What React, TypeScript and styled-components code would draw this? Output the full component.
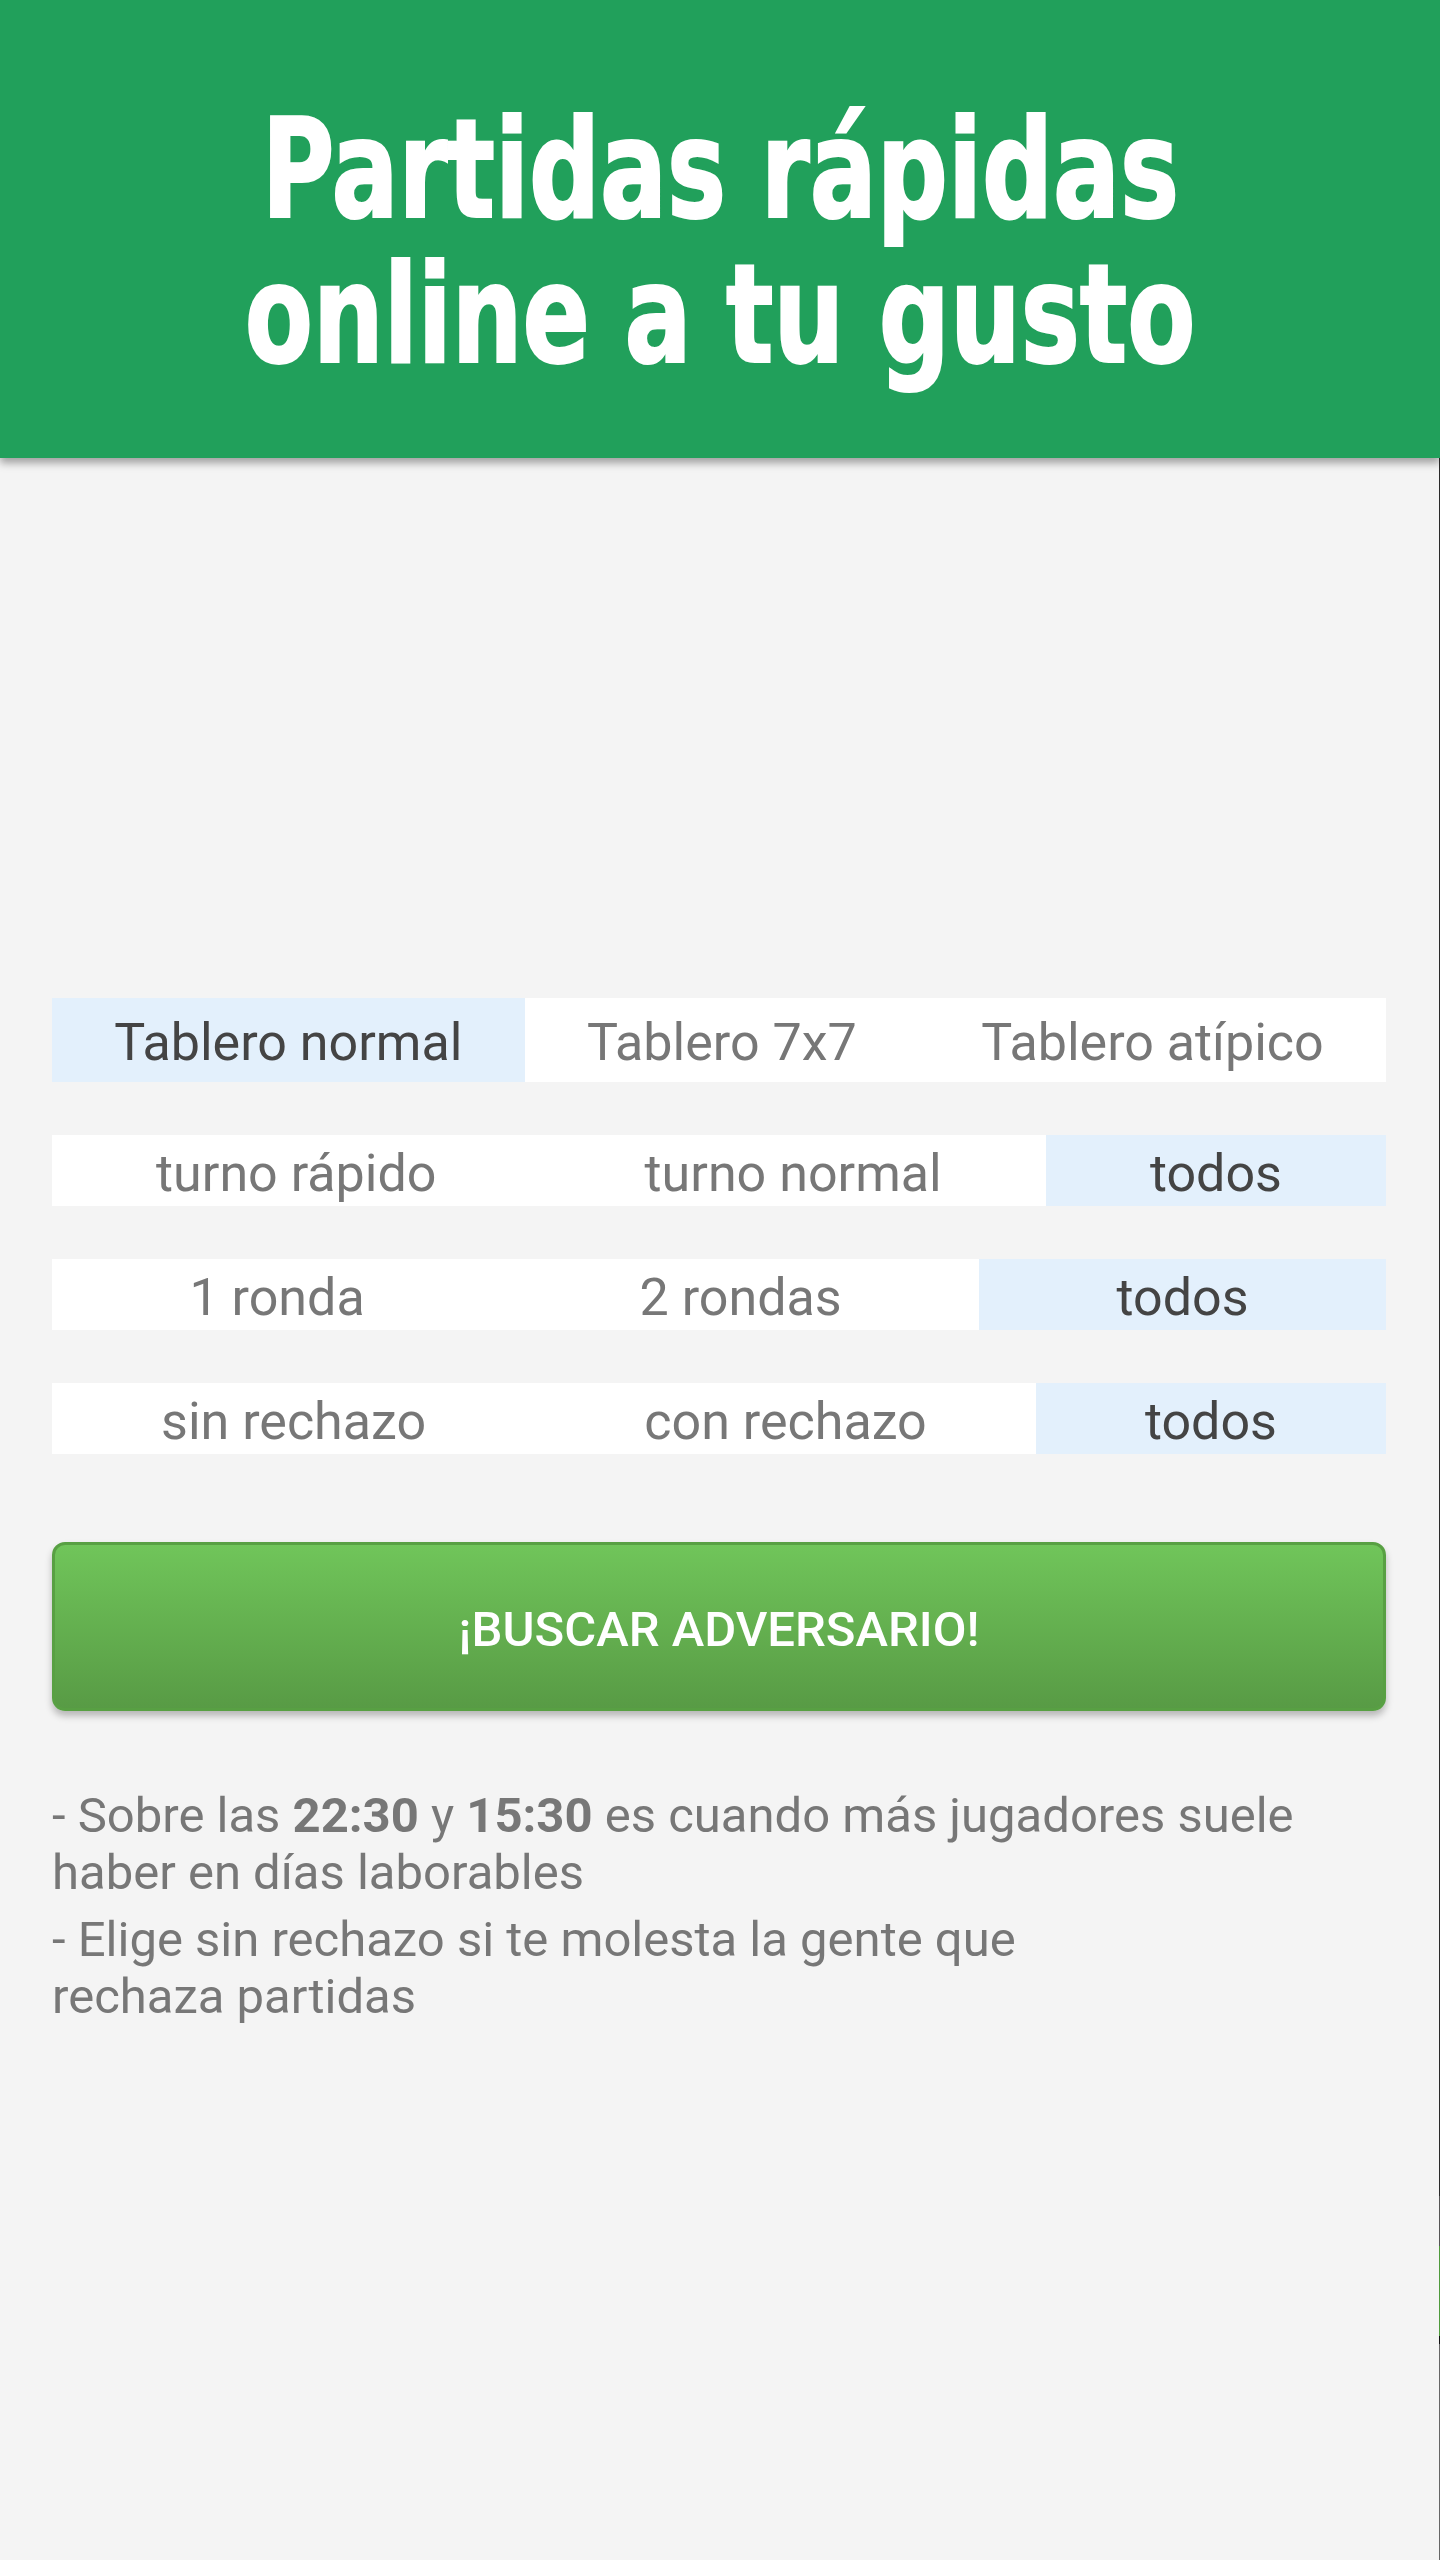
import { useState } from 'react';
import styled, { createGlobalStyle } from 'styled-components';

const GlobalStyle = createGlobalStyle`
  body {
    margin: 0;
    background: #f4f4f4;
    font-family: Roboto, 'Noto Sans', sans-serif;
  }
`;

const Page = styled.div`
  min-height: 2560px;
  display: flex;
  flex-direction: column;
`;

const Header = styled.header`
  position: relative;
  z-index: 1;
  background: #21a05b;
  padding: 97px 0 71px;
  text-align: center;
  box-shadow: 0 5px 8px rgba(0, 0, 0, 0.35);
`;

const Title = styled.h1`
  margin: 0;
  color: #fff;
  font-family: 'DejaVu Sans Condensed', 'DejaVu Sans', sans-serif;
  font-weight: 700;
  font-size: 138px;
  line-height: 145px;
`;

// the original uses a narrow display face; squeeze DejaVu to match
const TitleText = styled.span`
  display: inline-block;
  transform: scaleX(0.8);
  transform-origin: center;
  white-space: nowrap;
  -webkit-text-stroke: 2px #fff;
`;

const Body = styled.div`
  flex: 1;
  display: flex;
`;

const Main = styled.main`
  flex: 1;
  padding: 540px 53px 0 52px;
`;

// thin screen edge visible on the right of the capture
const Edge = styled.div`
  width: 1px;
  background: linear-gradient(
    to bottom,
    #2a2a2a 0,
    #2a2a2a 1738px,
    #555 1738px,
    #555 1788px,
    #4f9a3c 1788px,
    #4f9a3c 1878px,
    #111 1878px,
    #111 1886px,
    #666 1886px
  );
`;

const Groups = styled.div`
  display: flex;
  flex-direction: column;
  gap: 53px;
`;

const Row = styled.div<{ $height: number }>`
  display: flex;
  background: #fff;
  height: ${(p) => p.$height}px;
`;

const Cell = styled.div<{ $active: boolean }>`
  flex: 1 1 auto;
  display: flex;
  align-items: center;
  justify-content: center;
  padding-top: 5px;
  font-size: 52px;
  white-space: nowrap;
  cursor: pointer;
  color: ${(p) => (p.$active ? '#444' : '#777')};
  background: ${(p) => (p.$active ? '#e3f0fc' : 'transparent')};
`;

const SearchButton = styled.button`
  display: block;
  width: 100%;
  height: 169px;
  margin-top: 88px;
  padding-top: 6px;
  border: 3px solid #58a043;
  border-radius: 13px;
  background: linear-gradient(to bottom, #70c55a, #589b45);
  box-shadow: 0 5px 7px rgba(0, 0, 0, 0.25);
  color: #fff;
  font-family: Roboto, sans-serif;
  font-weight: 500;
  font-size: 49px;
  cursor: pointer;
`;

const Tips = styled.div`
  margin-top: 76px;
  color: #777;
  font-size: 49px;
  line-height: 57px;
`;

const Tip = styled.p`
  margin: 0 0 10px;
`;

const groups = [
  { height: 84, options: ['Tablero normal', 'Tablero 7x7', 'Tablero atípico'], initial: 0 },
  { height: 71, options: ['turno rápido', 'turno normal', 'todos'], initial: 2 },
  { height: 71, options: ['1 ronda', '2 rondas', 'todos'], initial: 2 },
  { height: 71, options: ['sin rechazo', 'con rechazo', 'todos'], initial: 2 },
];

export default function App() {
  const [selected, setSelected] = useState(groups.map((g) => g.initial));

  const pick = (group: number, option: number) => {
    setSelected((prev) => prev.map((v, i) => (i === group ? option : v)));
  };

  return (
    <Page>
      <GlobalStyle />
      <Header>
        <Title>
          <TitleText>Partidas rápidas</TitleText>
          <br />
          <TitleText>online a tu gusto</TitleText>
        </Title>
      </Header>
      <Body>
        <Main>
          <Groups>
            {groups.map((g, gi) => (
              <Row key={gi} $height={g.height}>
                {g.options.map((label, oi) => (
                  <Cell key={label} $active={selected[gi] === oi} onClick={() => pick(gi, oi)}>
                    {label}
                  </Cell>
                ))}
              </Row>
            ))}
          </Groups>
          <SearchButton>¡BUSCAR ADVERSARIO!</SearchButton>
          <Tips>
            <Tip>
              - Sobre las <b>22:30</b> y <b>15:30</b> es cuando más jugadores suele haber en días laborables
            </Tip>
            <Tip>
              - Elige sin rechazo si te molesta la gente que
              <br />
              rechaza partidas
            </Tip>
          </Tips>
        </Main>
        <Edge />
      </Body>
    </Page>
  );
}
